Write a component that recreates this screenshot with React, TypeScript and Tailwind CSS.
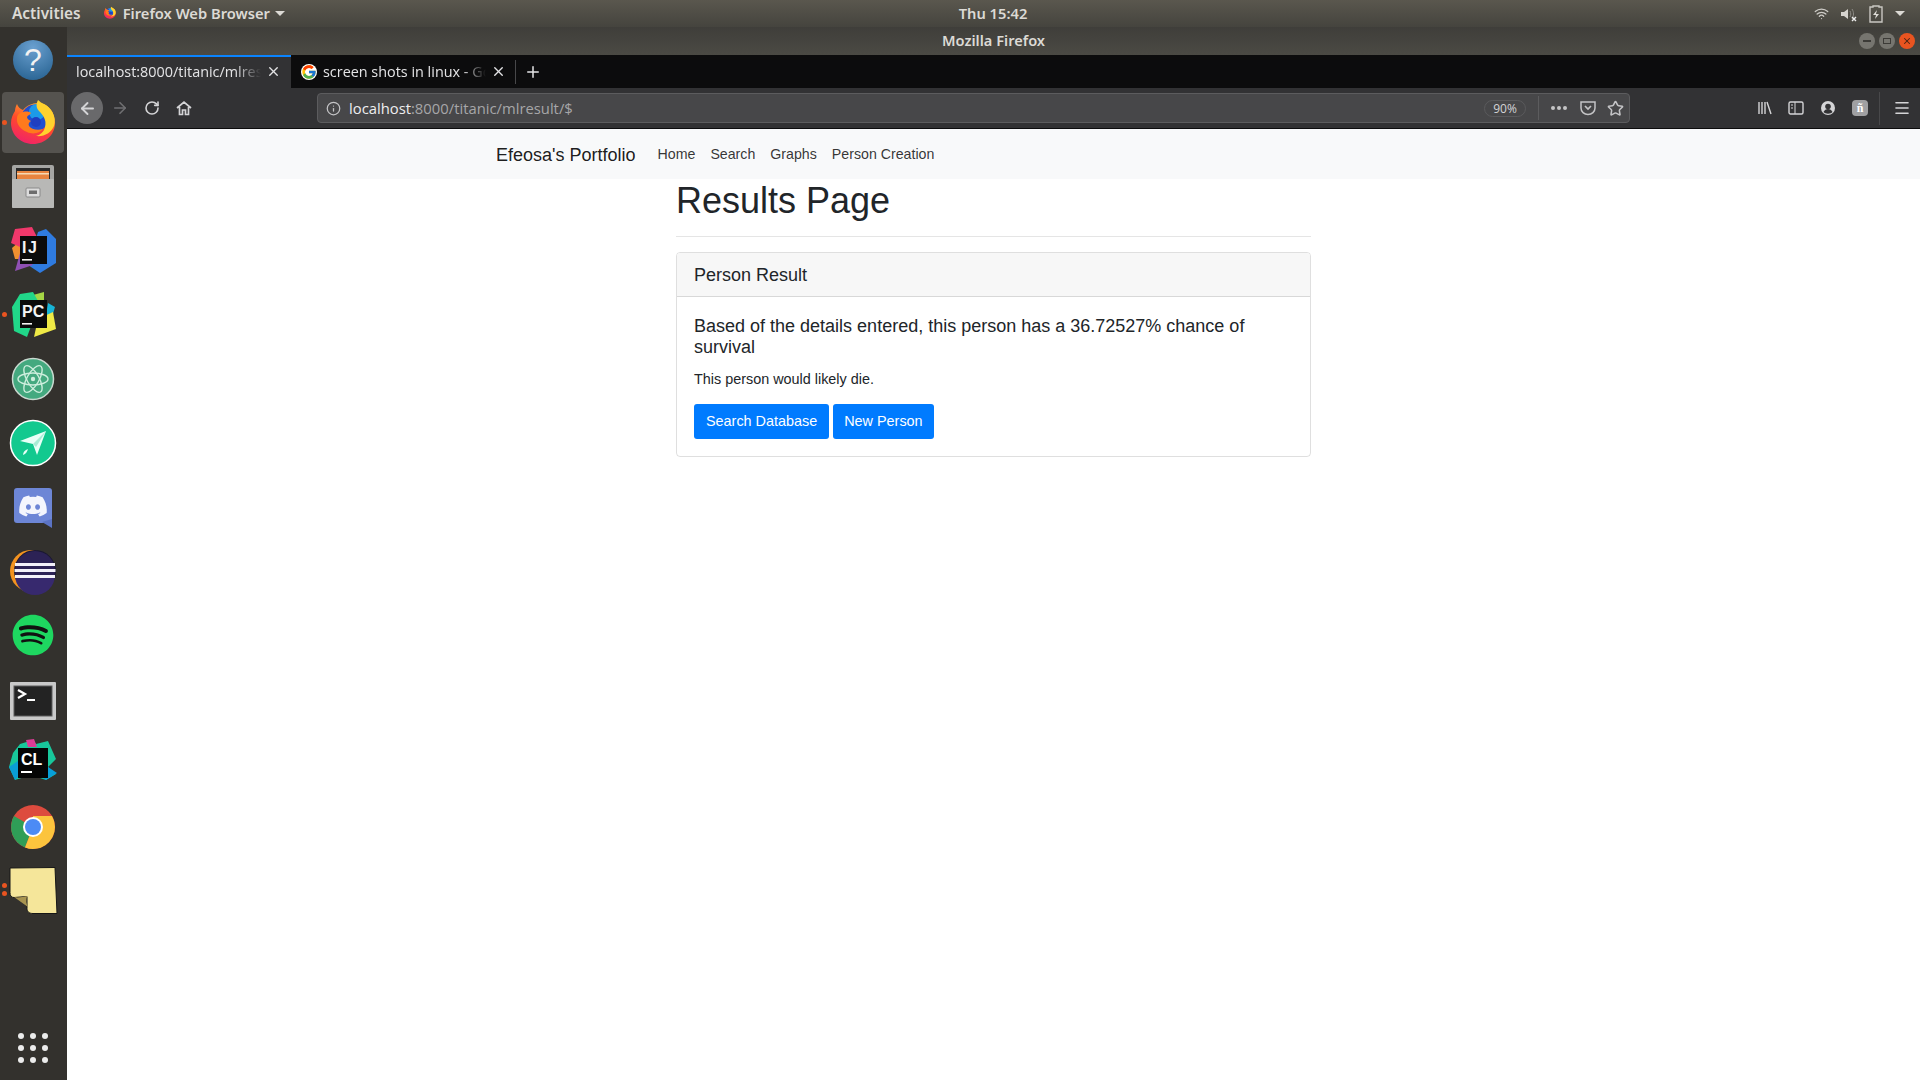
import { ReactNode } from "react";
import { ArrowLeft, ArrowRight, RotateCw, Info, Star, X, Plus, Menu, Wifi } from "lucide-react";
import { FaDiscord, FaSpotify } from "react-icons/fa";
import { FcGoogle } from "react-icons/fc";

const Slot = ({ children }: { children: ReactNode }) => (
  <svg viewBox="0 0 67 64" className="w-[67px] h-16 block">{children}</svg>
);

function FirefoxGlyph({ id }: { id: string }) {
  return (
    <>
      <defs>
        <linearGradient id={id} x1="0.7" y1="0" x2="0.3" y2="1">
          <stop offset="0" stopColor="#ffb02a" />
          <stop offset="0.5" stopColor="#ff4a2c" />
          <stop offset="1" stopColor="#f0216a" />
        </linearGradient>
      </defs>
      <path d="M17 13c1 3 3 5 6 6 3-4 9-7 15-7 10 0 17 9 17 20 0 12-10 21-22 21S11 44 11 32c0-5 2-9 4-12 0-3 1-5 2-7z" fill={`url(#${id})`} />
      <circle cx="35" cy="27" r="13.5" fill="#1f4fd0" />
      <circle cx="37" cy="21" r="8" fill="#1c9be8" />
      <path d="M38 9c-2 4-2 8 1 11 4 4 8 9 6 16-1 5-5 8-9 9 8 1 15-3 18-10 3-9-3-19-10-22-2-1-4-2-6-4z" fill="#ffd22e" />
      <path d="M20 22c4-2 9-2 11 0-1 2-3 2-4 4 0 2 2 3 4 4-2 1-3 3-2 5 2 3 8 5 14 3-3 4-10 6-16 3-6-2-11-8-10-14 0-2 1-4 3-5z" fill="#ff7a1c" />
      <circle cx="36" cy="31" r="5" fill="#1f3fc0" />
    </>
  );
}

function JetBrains({ label, shapes }: { label: string; shapes: ReactNode }) {
  return (
    <>
      {shapes}
      <rect x="20" y="17" width="27" height="28" fill="#0b0b0b" />
      <text x="22" y="34" fontFamily="'Liberation Sans',sans-serif" fontWeight="700" fontSize={label === "PC" ? 16 : 16} letterSpacing={label === "IJ" ? 1.5 : 0} fill="#f4f4f4">{label}</text>
      <rect x="22" y="40" width="10" height="1.6" fill="#f4f4f4" />
    </>
  );
}

const dockIcons: ReactNode[] = [
  <>
    <defs>
      <radialGradient id="helpg" cx="0.5" cy="0.2" r="0.9">
        <stop offset="0" stopColor="#6aa0d0" />
        <stop offset="1" stopColor="#25608f" />
      </radialGradient>
    </defs>
    <circle cx="33" cy="33" r="20" fill="url(#helpg)" />
    <text x="33" y="44" textAnchor="middle" fontFamily="'Liberation Sans',sans-serif" fontWeight="400" fontSize="32" fill="#f2f2f2">?</text>
  </>,
  <FirefoxGlyph id="ffdock" />,
  <>
    <rect x="12" y="10" width="42" height="43" rx="2" fill="#a5a5a3" />
    <rect x="16" y="13" width="34" height="12" fill="#2a2a2a" />
    <rect x="17" y="16" width="32" height="8" fill="#e8843f" />
    <rect x="17" y="18" width="32" height="1.5" fill="#f5d9b5" />
    <rect x="12" y="24" width="42" height="29" rx="1" fill="#b8b8b6" />
    <rect x="26" y="33" width="14" height="9" rx="1" fill="#dcdcdc" stroke="#8a8a8a" />
    <rect x="29" y="35.5" width="8" height="3.5" fill="#6d6d6d" />
  </>,
  <JetBrains
    label="IJ"
    shapes={
      <>
        <polygon points="38,13 46,10 56,20 56,44 40,54 28,46" fill="#2f7be0" />
        <polygon points="12,29 20,22 22,40 15,40" fill="#f09030" />
        <polygon points="20,34 33,46 15,52" fill="#9050b4" />
        <polygon points="15,10 32,8 38,20 20,28 11,24" fill="#f0386b" />
      </>
    }
  />,
  <JetBrains
    label="PC"
    shapes={
      <>
        <polygon points="48,20 55,24 52,34 46,32" fill="#17b4d6" />
        <polygon points="33,12 44,9 44,22 30,22" fill="#a5d645" />
        <polygon points="20,11 33,9 38,18 30,46 27,54 14,48 12,24" fill="#21d789" />
        <polygon points="38,36 53,29 56,46 34,54" fill="#f0ea46" />
      </>
    }
  />,
  <>
    <circle cx="33" cy="32" r="20.5" fill="#44a97f" stroke="#c9d9d0" strokeWidth="1.5" />
    <g fill="none" stroke="#cdeedd" strokeWidth="1.4">
      <ellipse cx="33" cy="32" rx="15" ry="6" />
      <ellipse cx="33" cy="32" rx="15" ry="6" transform="rotate(60 33 32)" />
      <ellipse cx="33" cy="32" rx="15" ry="6" transform="rotate(120 33 32)" />
    </g>
    <circle cx="33" cy="32" r="2.2" fill="#cdeedd" />
  </>,
  <>
    <circle cx="33" cy="32" r="22.5" fill="#12c98f" stroke="#fff" strokeWidth="1.5" />
    <polygon points="20,30 46,20 37,44 33,33" fill="#e8fff7" />
    <polygon points="33,33 46,20 36,36" fill="#a9ecd5" />
    <path d="M23 44c0-3 2-5 5-6-1 3-2 5-5 6z" fill="#e8fff7" />
  </>,
  <>
    <rect x="14" y="13" width="38" height="35" rx="3" fill="#6d86d6" />
    <polygon points="42,47 52,44 52,53" fill="#5b73c4" />
    <FaDiscord x={18} y={16} size={30} color="#f4f6fd" />
  </>,
  <>
    <circle cx="31" cy="32" r="21" fill="#f39320" />
    <circle cx="35" cy="32" r="21" fill="#191731" />
    <circle cx="35" cy="32" r="20" fill="#2c2255" />
    <path d="M15 36a20 20 0 0 0 40 0z" fill="#37296e" />
    <rect x="15" y="24" width="40" height="3" fill="#f2f0f8" />
    <rect x="14.5" y="30" width="41" height="3" fill="#f2f0f8" />
    <rect x="15" y="36" width="40" height="3" fill="#f2f0f8" />
  </>,
  <>
    <circle cx="33" cy="32" r="19" fill="#111" />
    <FaSpotify x={12} y={11} size={42} color="#1ed760" />
  </>,
  <>
    <rect x="10" y="15" width="46" height="38" rx="1" fill="#c9c9c9" />
    <rect x="14" y="19" width="38" height="30" fill="#232323" stroke="#5c5c5c" />
    <path d="M18 23l7 4-7 4" fill="none" stroke="#fff" strokeWidth="2.2" />
    <rect x="27" y="32" width="8" height="2" fill="#fff" />
  </>,
  <>
    <polygon points="20,13 33,9 36,13 48,10 56,28 48,36 56,43 46,49 31,44 15,49 9,36 13,22" fill="#18c79b" />
    <polygon points="48,36 57,42 46,49 36,42" fill="#089fd9" />
    <polygon points="26,9 34,8 37,16 28,16" fill="#dc3b96" />
    <polygon points="9,36 18,30 18,46 15,49" fill="#0a9ed6" />
    <rect x="18" y="17" width="30" height="30" fill="#050505" />
    <text x="21" y="34" fontFamily="'Liberation Sans',sans-serif" fontWeight="700" fontSize="16" fill="#fff">CL</text>
    <rect x="21" y="40" width="11" height="2" fill="#fff" />
  </>,
  <>
    <circle cx="33" cy="32" r="22" fill="#dd4b3e" />
    <path d="M33 32L14 21A22 22 0 0 0 25 52.5z" fill="#2f9e57" />
    <path d="M33 32L25 52.5A22 22 0 0 0 55 32 22 22 0 0 0 52 21H33z" fill="#fcc43d" />
    <circle cx="33" cy="32" r="10" fill="#fff" />
    <circle cx="33" cy="32" r="8" fill="#4c8bf5" />
  </>,
  <>
    <path d="M10 9l45-0.5 2 46H33c-4 0-6-2-6-5l0-12-13 1c-3 0-4-2-4-5z" fill="#f5e69a" stroke="#161616" strokeWidth="1" />
    <path d="M14 38c4 1 9 0 13-1-1 4-1 8 1 11z" fill="#a89450" />
  </>,
];

function Dock() {
  return (
    <div className="w-[67px] shrink-0 bg-[#33312d] flex flex-col relative">
      {dockIcons.map((icon, i) => (
        <div key={i} className="relative h-16">
          {i === 1 && <div className="absolute left-[2px] right-[3px] top-px bottom-[2px] rounded bg-[#55534f]" />}
          <div className="absolute inset-0">
            <Slot>{icon}</Slot>
          </div>
          {(i === 1 || i === 4) && <span className="absolute left-[2px] top-[29px] w-[5px] h-[5px] rounded-full bg-[#e95420]" />}
          {i === 13 && (
            <>
              <span className="absolute left-[2px] top-[24px] w-[5px] h-[5px] rounded-full bg-[#e95420]" />
              <span className="absolute left-[2px] top-[32px] w-[5px] h-[5px] rounded-full bg-[#e95420]" />
            </>
          )}
        </div>
      ))}
      <div className="mt-auto mb-[17px] grid grid-cols-3 gap-[6px] w-[30px] ml-[18px]">
        {Array.from({ length: 9 }).map((_, i) => (
          <span key={i} className="w-[6px] h-[6px] rounded-full bg-[#ececec]" />
        ))}
      </div>
    </div>
  );
}

function TopBar() {
  return (
    <div className="h-[27px] shrink-0 flex items-center bg-gradient-to-b from-[#5a574e] to-[#45443e] text-[#dcdad5] text-[14.7px] font-semibold font-['Noto_Sans',sans-serif]">
      <div className="w-[870px] shrink-0 flex items-center">
        <span className="ml-3 text-[15.4px]">Activities</span>
        <svg viewBox="0 0 67 64" className="w-[18px] h-[18px] ml-[20px]"><FirefoxGlyph id="fftop" /></svg>
        <span className="ml-[4px]">Firefox Web Browser</span>
        <span className="ml-[5px] w-0 h-0 border-x-[5px] border-x-transparent border-t-[5px] border-t-[#dcdad5]" />
      </div>
      <span className="w-[246px] text-center">Thu 15:42</span>
      <div className="flex-1 flex items-center justify-end">
        <Wifi size={15} className="mr-[10px] text-[#cfcdc8]" />
        <svg viewBox="0 0 18 18" className="w-[18px] h-[18px] mr-[12px]">
          <path d="M2 7h3l4-3v10l-4-3H2z" fill="#d5d3ce" />
          <path d="M11 6c1 2 1 4 0 6M13 4c2 3 2 7 0 10" stroke="#8d8b85" fill="none" />
          <path d="M13 12l4 4m0-4l-4 4" stroke="#eee" strokeWidth="1.4" />
        </svg>
        <svg viewBox="0 0 14 18" className="w-[14px] h-[18px] mr-[12px]">
          <path d="M4 1h6v1h3v15H1V2h3z" fill="none" stroke="#c9c7c2" strokeWidth="1.4" />
          <path d="M8 5l-4 5h3l-1 4 4-5H7z" fill="#dedcd7" />
        </svg>
        <span className="mr-[15px] w-0 h-0 border-x-[5px] border-x-transparent border-t-[5px] border-t-[#dcdad5]" />
      </div>
    </div>
  );
}

function TitleBar() {
  return (
    <div className="h-[28px] shrink-0 flex items-center bg-gradient-to-b from-[#3f3e3a] to-[#4b4a44] text-[#dcdad5] text-[14.6px] font-semibold font-['Noto_Sans',sans-serif]">
      <span className="w-[62px]" />
      <span className="flex-1 text-center">Mozilla Firefox</span>
      <div className="w-[62px] flex items-center gap-1 pr-[5px] justify-end">
        <span className="w-4 h-4 rounded-full bg-[#76756f] flex items-center justify-center"><span className="w-2 h-[2px] bg-[#3c3b37]" /></span>
        <span className="w-4 h-4 rounded-full bg-[#76756f] flex items-center justify-center"><span className="w-2 h-[6px] border border-[#3c3b37]" /></span>
        <span className="w-4 h-4 rounded-full bg-[#e95420] flex items-center justify-center"><X size={10} strokeWidth={2.5} className="text-[#4a2414]" /></span>
      </div>
    </div>
  );
}

function Tabs() {
  return (
    <div className="h-[33px] shrink-0 flex bg-[#0c0c0d] text-[14.4px] font-['Open_Sans',sans-serif] text-[#e4e4e6]">
      <div className="w-[224px] border-t-2 border-[#0a84ff] bg-[#323234] flex items-center pl-[9px] pr-[10px] pb-[2px]">
        <span className="flex-1 min-w-0 overflow-hidden whitespace-nowrap [mask-image:linear-gradient(to_right,black_86%,transparent)]">localhost:8000/titanic/mlresult/$</span>
        <X size={15} strokeWidth={2.2} className="ml-[5px] shrink-0" />
      </div>
      <div className="w-[219px] flex items-center pl-[10px] pr-[4px]">
        <FcGoogle size={16} className="shrink-0 rounded-full bg-white" />
        <span className="ml-[6px] flex-1 min-w-0 overflow-hidden whitespace-nowrap [mask-image:linear-gradient(to_right,black_86%,transparent)]">screen shots in linux - Google Search</span>
        <X size={15} strokeWidth={2.2} className="ml-[5px] shrink-0" />
      </div>
      <span className="w-px h-[24px] my-auto ml-[5px] bg-[#48484a]" />
      <Plus size={18} className="ml-[8px] my-auto" />
    </div>
  );
}

function Toolbar() {
  return (
    <div className="h-[41px] shrink-0 flex items-center bg-[#323234] border-b border-[#0c0c0d] text-[#d4d4d6]">
      <span className="ml-[4px] w-8 h-8 rounded-full bg-[#69696b] flex items-center justify-center"><ArrowLeft size={19} strokeWidth={2.4} /></span>
      <ArrowRight size={18} strokeWidth={2.2} className="ml-[8px] text-[#6f6f71]" />
      <RotateCw size={16} strokeWidth={2.4} className="ml-[15px]" />
      <svg viewBox="0 0 16 16" className="ml-[16px] w-4 h-4">
        <path d="M1 8l7-6 7 6M3.5 7v7.5h3V10h3v4.5h3V7" fill="none" stroke="#d4d4d6" strokeWidth="1.7" />
      </svg>
      <div className="ml-[125px] w-[1313px] h-[30px] rounded bg-[#474749] border border-[#5c5c5e] flex items-center pr-[5px] text-[14.8px] font-['Open_Sans',sans-serif]">
        <Info size={15} className="ml-[8px] text-[#c4c4c6]" />
        <span className="ml-[8px] text-[#eeeeef]">localhost<span className="text-[#a6a6a8]">:8000/titanic/mlresult/$</span></span>
        <span className="ml-auto w-[42px] h-[17px] rounded-full border border-[#5a5a5c] text-[12px] leading-[15px] text-center text-[#d4d4d6]">90%</span>
        <span className="ml-[12px] w-px h-[24px] bg-[#5c5c5e]" />
        <span className="ml-[12px] flex gap-[2px]">
          <i className="w-[4px] h-[4px] rounded-full bg-[#c4c4c6]" />
          <i className="w-[4px] h-[4px] rounded-full bg-[#c4c4c6]" />
          <i className="w-[4px] h-[4px] rounded-full bg-[#c4c4c6]" />
        </span>
        <svg viewBox="0 0 16 16" className="ml-[13px] w-4 h-4">
          <path d="M1 2h14v6a7 6.5 0 0 1-14 0z" fill="none" stroke="#c4c4c6" strokeWidth="1.5" />
          <path d="M5 6l3 3 3-3" fill="none" stroke="#c4c4c6" strokeWidth="1.7" />
        </svg>
        <Star size={17} strokeWidth={2.2} className="ml-[11px] text-[#c4c4c6]" />
      </div>
      <svg viewBox="0 0 16 16" className="ml-[127px] w-4 h-4">
        <path d="M2 2v12M5 2v12M8 2v12M10 2l4 12" stroke="#d4d4d6" strokeWidth="1.4" />
      </svg>
      <svg viewBox="0 0 16 16" className="ml-[15px] w-4 h-4">
        <rect x="1" y="2" width="14" height="12" rx="1.5" fill="none" stroke="#d4d4d6" strokeWidth="1.4" />
        <path d="M7 2v12M3 5h2M3 8h2" stroke="#d4d4d6" />
      </svg>
      <svg viewBox="0 0 16 16" className="ml-[16px] w-4 h-4">
        <circle cx="8" cy="8" r="7" fill="#d4d4d6" />
        <circle cx="8" cy="6.5" r="2.8" fill="#323234" />
        <path d="M3.5 12c1-2 2.5-3 4.5-3s3.5 1 4.500 3c-1 1-2.500 1.700-4.500 1.700S4.500 13 3.500 12z" fill="#323234" />
      </svg>
      <span className="ml-[16px] w-4 h-4 rounded-sm bg-[#a0a0a2] text-[12px] leading-4 text-center text-white font-bold font-['Liberation_Serif',serif]">ñ</span>
      <span className="ml-[11px] w-px h-[33px] bg-[#48484a]" />
      <Menu size={18} strokeWidth={2.2} className="ml-[13px]" />
    </div>
  );
}

function Page() {
  return (
    <div className="flex-1 bg-white text-[#212529] font-['Liberation_Sans',sans-serif] overflow-hidden">
      <nav className="h-[50px] bg-[#f8f9fa] flex items-center pl-[429px] pt-[2px]">
        <span className="text-[18px] mr-[22px] text-black/90">Efeosa's Portfolio</span>
        <div className="flex gap-[15px] text-[14.2px] text-black/80">
          <a>Home</a>
          <a>Search</a>
          <a>Graphs</a>
          <a>Person Creation</a>
        </div>
      </nav>
      <main className="w-[635px] mx-auto">
        <div className="border-b border-[#e5e5e5] pb-[14px] mb-[15px]">
          <h1 className="text-[36px] leading-[43px]">Results Page</h1>
        </div>
        <div className="border border-black/[.125] rounded-[4px] overflow-hidden">
          <div className="h-[44px] bg-[#f7f7f7] border-b border-black/[.125] px-[17px] pt-[2px] flex items-center text-[18px]">Person Result</div>
          <div className="px-[17px] pt-[19px] pb-[17px]">
            <p className="text-[18px] leading-[21px]">Based of the details entered, this person has a 36.72527% chance of survival</p>
            <p className="text-[14.4px] leading-[22px] mt-[10px]">This person would likely die.</p>
            <div className="flex gap-1 mt-[14px]">
              <button className="h-[35px] px-[12px] rounded-[3px] bg-[#007bff] text-white text-[14.4px]">Search Database</button>
              <button className="h-[35px] px-[11px] rounded-[3px] bg-[#007bff] text-white text-[14.4px]">New Person</button>
            </div>
          </div>
        </div>
      </main>
    </div>
  );
}

export default function App() {
  return (
    <div className="w-[1920px] h-[1080px] flex flex-col overflow-hidden">
      <TopBar />
      <div className="flex-1 flex min-h-0">
        <Dock />
        <div className="flex-1 flex flex-col min-w-0">
          <TitleBar />
          <Tabs />
          <Toolbar />
          <Page />
        </div>
      </div>
    </div>
  );
}
